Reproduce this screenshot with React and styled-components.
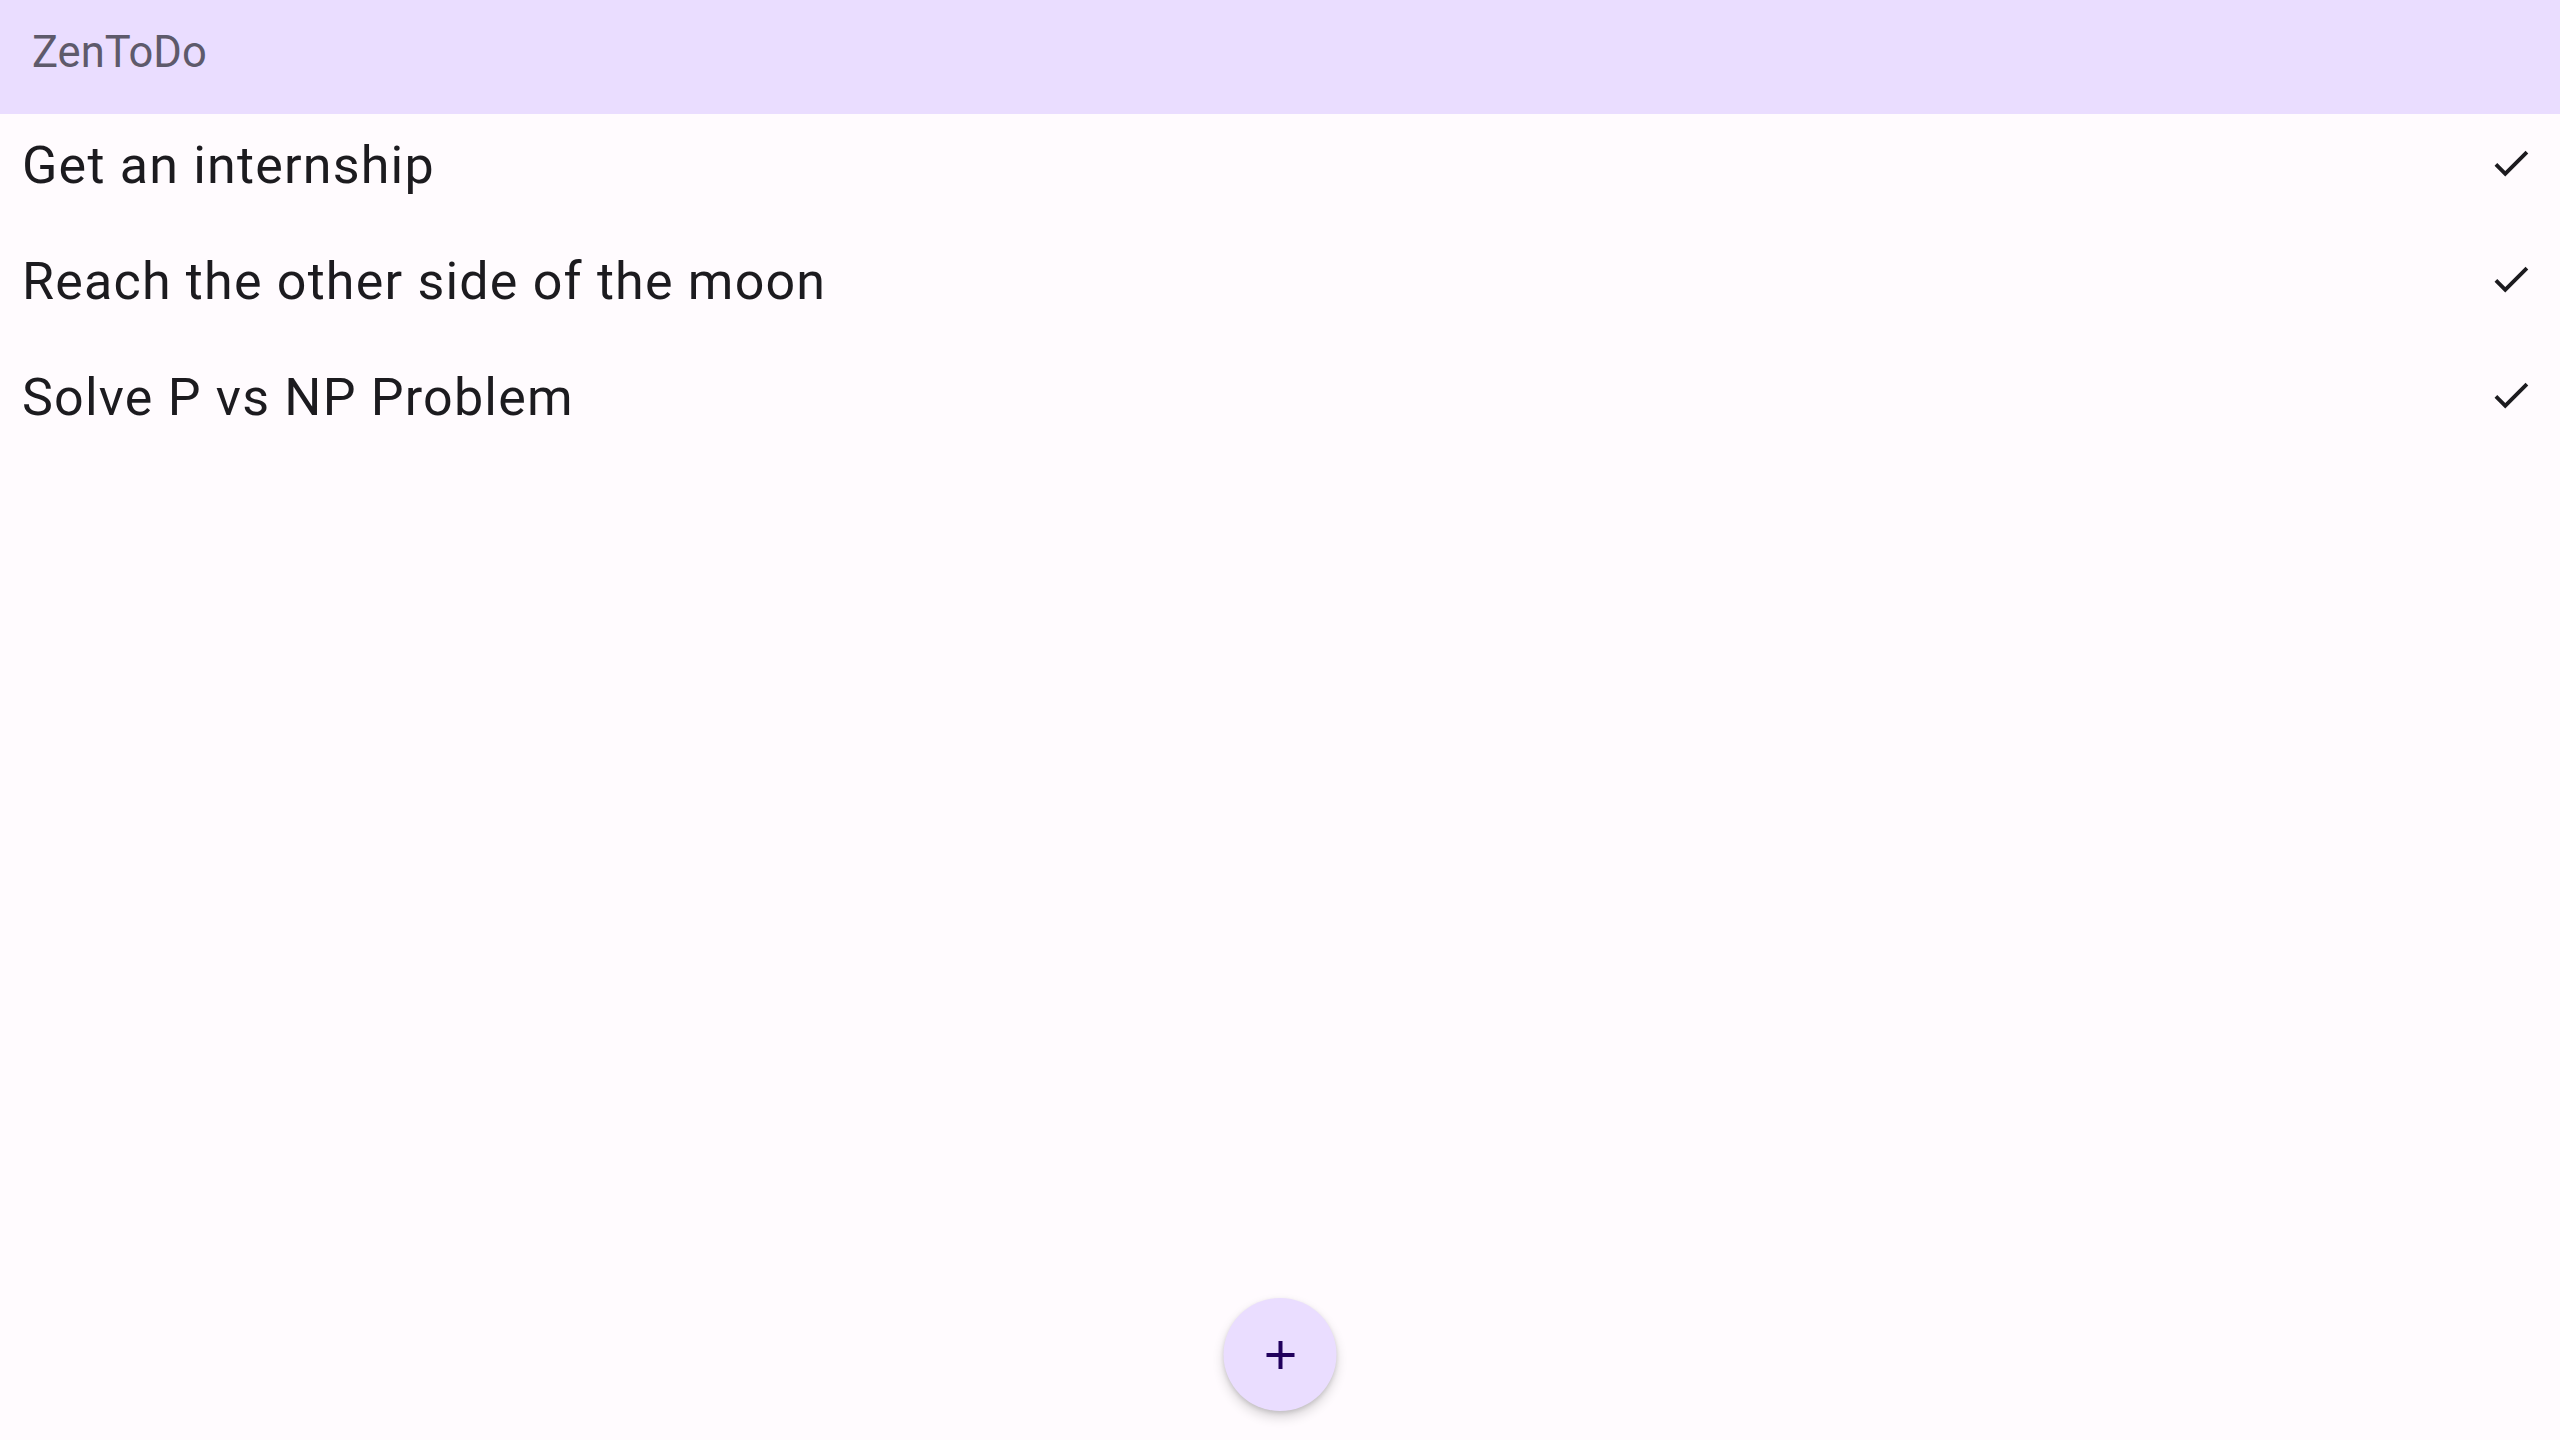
import styled, { createGlobalStyle } from 'styled-components';

const todos = [
    'Get an internship',
    'Reach the other side of the moon',
    'Solve P vs NP Problem',
];

export default function App() {
    return (
        <>
            <GlobalStyle />
            <Screen>
                <TopBar>
                    <Title>ZenToDo</Title>
                </TopBar>

                <List>
                    {todos.map((todo, i) => (
                        <Row key={i}>
                            <Label>{todo}</Label>
                            <DoneButton aria-label="Done">
                                <svg viewBox="0 0 24 24" width="46" height="46">
                                    <path fill="currentColor" d="M9 16.17L4.83 12l-1.42 1.41L9 19 21 7l-1.41-1.41z" />
                                </svg>
                            </DoneButton>
                        </Row>
                    ))}
                </List>

                <Fab aria-label="Add">
                    <svg viewBox="0 0 24 24" width="48" height="48">
                        <path fill="currentColor" d="M19 13h-6v6h-2v-6H5v-2h6V5h2v6h6v2z" />
                    </svg>
                </Fab>
            </Screen>
        </>
    );
}

const GlobalStyle = createGlobalStyle`
    * {
        box-sizing: border-box;
    }

    body {
        margin: 0;
        background-color: #FFFBFE;
        font-family: Roboto, "Liberation Sans", sans-serif;
    }
`;

const Screen = styled.div`
    width: 100%;
    height: 100vh;
    background-color: #FFFBFE;
    display: flex;
    flex-direction: column;
    position: relative;
`;

const TopBar = styled.header`
    width: 100%;
    height: 114px;
    background-color: #EADDFF;
    display: flex;
    align-items: center;
    padding: 0 32px 10px;
`;

const Title = styled.h1`
    margin: 0;
    font-size: 43.5px;
    font-weight: 400;
    color: #5e5a6b;
`;

const List = styled.ul`
    margin: 0;
    padding: 0;
    list-style: none;
    display: flex;
    flex-direction: column;
    gap: 18px;
`;

const Row = styled.li`
    height: 98px;
    display: flex;
    justify-content: space-between;
    align-items: center;
    padding: 0 26px 0 22px;
`;

const Label = styled.span`
    padding-top: 5px;
    font-size: 52px;
    font-weight: 400;
    letter-spacing: 1.2px;
    color: #1C1B1F;
`;

const DoneButton = styled.button`
    border: none;
    background: none;
    padding: 0;
    color: #1C1B1F;
    display: flex;
    cursor: pointer;
`;

const Fab = styled.button`
    position: absolute;
    left: 50%;
    bottom: 29px;
    transform: translateX(-50%);
    width: 113px;
    height: 113px;
    border: none;
    border-radius: 50%;
    background-color: #EADDFF;
    color: #21005D;
    display: flex;
    justify-content: center;
    align-items: center;
    box-shadow: 0 6px 12px rgba(0, 0, 0, 0.16), 0 2px 4px rgba(0, 0, 0, 0.12);
    cursor: pointer;
`;
